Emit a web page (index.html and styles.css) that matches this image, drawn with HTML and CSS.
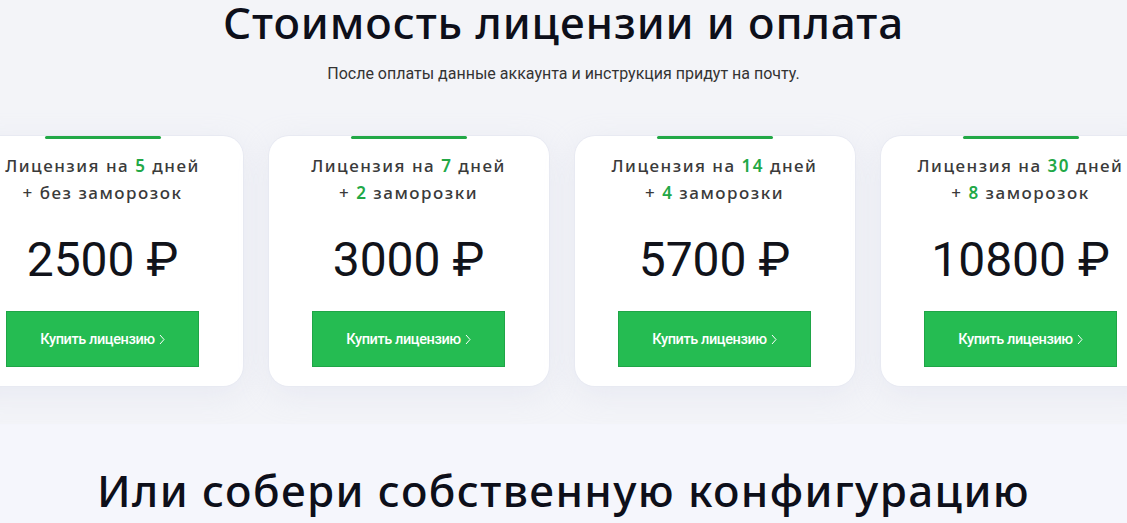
FILE: index.html
```html
<!DOCTYPE html>
<html lang="ru">
<head>
<meta charset="utf-8">
<link rel="stylesheet" href="styles.css">
</head>
<body>
<section class="pricing">
  <h1 class="title">Стоимость лицензии и оплата</h1>
  <p class="subtitle">После оплаты данные аккаунта и инструкция придут на почту.</p>
  <div class="cards">
    <div class="card">
      <div class="card-bar"></div>
      <div class="card-name">Лицензия на <b>5</b> дней<br>+ без заморозок</div>
      <div class="price">2500 ₽</div>
      <a class="buy" href="#">Купить лицензию <svg class="chev" width="6" height="11" viewBox="0 0 6 11"><path d="M1 1l4 4.5L1 10" fill="none" stroke="#fff" stroke-width="1"/></svg></a>
    </div>
    <div class="card">
      <div class="card-bar"></div>
      <div class="card-name">Лицензия на <b>7</b> дней<br>+ <b>2</b> заморозки</div>
      <div class="price">3000 ₽</div>
      <a class="buy" href="#">Купить лицензию <svg class="chev" width="6" height="11" viewBox="0 0 6 11"><path d="M1 1l4 4.5L1 10" fill="none" stroke="#fff" stroke-width="1"/></svg></a>
    </div>
    <div class="card">
      <div class="card-bar"></div>
      <div class="card-name">Лицензия на <b>14</b> дней<br>+ <b>4</b> заморозки</div>
      <div class="price">5700 ₽</div>
      <a class="buy" href="#">Купить лицензию <svg class="chev" width="6" height="11" viewBox="0 0 6 11"><path d="M1 1l4 4.5L1 10" fill="none" stroke="#fff" stroke-width="1"/></svg></a>
    </div>
    <div class="card">
      <div class="card-bar"></div>
      <div class="card-name">Лицензия на <b>30</b> дней<br>+ <b>8</b> заморозок</div>
      <div class="price">10800 ₽</div>
      <a class="buy" href="#">Купить лицензию <svg class="chev" width="6" height="11" viewBox="0 0 6 11"><path d="M1 1l4 4.5L1 10" fill="none" stroke="#fff" stroke-width="1"/></svg></a>
    </div>
  </div>
</section>
<section class="config">
  <h2 class="config-title">Или собери собственную конфигурацию</h2>
</section>
</body>
</html>
```

FILE: styles.css
```css
html, body {
  margin: 0;
  padding: 0;
}
body {
  background: #f3f4f8;
  overflow: hidden;
  width: 1127px;
  height: 523px;
  font-family: "Noto Sans", sans-serif;
}
.pricing {
  background: #f3f4f8;
  padding-bottom: 38px;
  display: flex;
  flex-direction: column;
  align-items: center;
}
.title {
  margin: 0;
  font-family: "Noto Sans", sans-serif;
  font-weight: 500;
  font-size: 44px;
  line-height: 44px;
  color: #0d0f1a;
  letter-spacing: 0.9px;
}
.subtitle {
  margin: 20px 0 0;
  font-family: Roboto, sans-serif;
  font-size: 16px;
  line-height: 20px;
  color: #333;
}
.cards {
  margin-top: 52px;
  width: 100%;
  display: flex;
  justify-content: center;
  gap: 26px;
  transform: translateX(-2px);
}
.card {
  flex: 0 0 280px;
  height: 250px;
  box-sizing: border-box;
  background: #fff;
  border-radius: 20px;
  box-shadow: 0 0 0 1px #e8eaf2, 0 8px 30px rgba(205, 208, 228, 0.3);
  display: flex;
  flex-direction: column;
  align-items: center;
}
.card-bar {
  width: 116px;
  height: 3px;
  background: #22a846;
  border-radius: 2px;
}
.card-name {
  margin-top: 13px;
  font-family: "Noto Sans", sans-serif;
  font-weight: 500;
  font-size: 17px;
  line-height: 27px;
  color: #3a3a3a;
  text-align: center;
  letter-spacing: 1.5px;
  white-space: nowrap;
}
.card-name b {
  color: #22a846;
  font-weight: 600;
}
.price {
  margin-top: 27px;
  font-family: Roboto, sans-serif;
  font-size: 48px;
  line-height: 54px;
  color: #11131a;
}
.buy {
  margin-top: 24px;
  width: 193px;
  height: 56px;
  box-sizing: border-box;
  background: #25bc52;
  border: 1px solid #1fa547;
  color: #fff;
  text-decoration: none;
  font-family: Roboto, sans-serif;
  font-weight: 500;
  font-size: 14.5px;
  letter-spacing: -0.4px;
  display: flex;
  align-items: center;
  justify-content: center;
  gap: 4px;
}
.chev {
  display: block;
}
.config {
  background: #f5f6fc;
  height: 200px;
  display: flex;
  justify-content: center;
}
.config-title {
  margin: 40px 0 0;
  font-family: "Noto Sans", sans-serif;
  font-weight: 500;
  font-size: 44px;
  line-height: 52px;
  color: #0d0f1a;
  letter-spacing: 1.4px;
}
```
